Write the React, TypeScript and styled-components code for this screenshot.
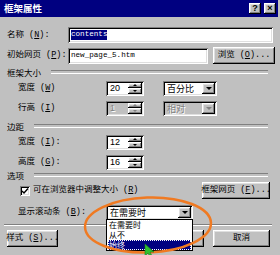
import React from 'react';
import styled, { createGlobalStyle } from 'styled-components';

const GlobalStyle = createGlobalStyle`
  html, body {
    margin: 0;
    padding: 0;
    background: #c0c0c0;
  }
  body {
    font-family: "Liberation Mono", "Noto Sans CJK SC", monospace;
    font-size: 8.5px;
    color: #000;
  }
  * {
    box-sizing: border-box;
  }
`;

const raised = `
  box-shadow: inset -1px -1px #000, inset 1px 1px #fff,
    inset -2px -2px #808080, inset 2px 2px #dfdfdf;
`;

const sunken = `
  box-shadow: inset 1px 1px #808080, inset -1px -1px #fff,
    inset 2px 2px #000, inset -2px -2px #dfdfdf;
`;

const Dialog = styled.div`
  position: relative;
  width: 280px;
  height: 255px;
  overflow: hidden;
  background: #c0c0c0;
`;

const TitleBar = styled.div`
  display: flex;
  align-items: center;
  width: 278px;
  height: 17px;
  padding: 0 2px 0 4px;
  background: #000080;
`;

const Title = styled.div`
  flex: 1;
  color: #fff;
  font-family: "Noto Sans CJK SC", sans-serif;
  font-weight: bold;
  font-size: 9.5px;
  line-height: 1;
`;

const TitleButton = styled.div`
  display: flex;
  align-items: center;
  justify-content: center;
  width: 12px;
  height: 11px;
  margin-left: 3px;
  background: #c0c0c0;
  ${raised}
  font: bold 9px "Liberation Sans", sans-serif;
  line-height: 1;
`;

const Body = styled.div`
  display: flex;
  flex-direction: column;
  padding-left: 7px;
`;

const Row = styled.div<{ $mt: number; $h?: number; $indent?: number; $w?: number }>`
  display: flex;
  align-items: center;
  height: ${(p) => p.$h ?? 16}px;
  margin-top: ${(p) => p.$mt}px;
  padding-left: ${(p) => p.$indent ?? 0}px;
  width: ${(p) => (p.$w ? `${p.$w}px` : 'auto')};
  line-height: 1;
`;

const Label = styled.span<{ $w?: number }>`
  flex: none;
  width: ${(p) => (p.$w ? `${p.$w}px` : 'auto')};
  white-space: nowrap;
`;

const TextBox = styled.div<{ $w: number }>`
  display: flex;
  align-items: center;
  width: ${(p) => p.$w}px;
  height: 16px;
  padding-left: 3px;
  background: #fff;
  ${sunken}
  font-size: 7.6px;
  white-space: nowrap;
`;

const Selection = styled.span`
  background: #000080;
  color: #fff;
  padding: 1px 0;
`;

const Field = styled.div<{ $w: number; $disabled?: boolean }>`
  position: relative;
  display: flex;
  width: ${(p) => p.$w}px;
  height: 15px;
  padding: 2px;
  background: ${(p) => (p.$disabled ? '#c0c0c0' : '#fff')};
  ${sunken}
`;

const FieldText = styled.span<{ $disabled?: boolean; $sans?: boolean }>`
  flex: 1;
  display: flex;
  align-items: center;
  padding-left: 2px;
  font-family: ${(p) => (p.$sans ? '"Liberation Sans", sans-serif' : '"Noto Sans CJK SC", sans-serif')};
  font-size: 9px;
  color: ${(p) => (p.$disabled ? '#808080' : '#000')};
  text-shadow: ${(p) => (p.$disabled ? '1px 1px #fff' : 'none')};
`;

const SpinButtons = styled.div`
  display: flex;
  flex-direction: column;
  width: 14px;
`;

const SpinButton = styled.div`
  flex: 1;
  display: flex;
  align-items: center;
  justify-content: center;
  background: #c0c0c0;
  ${raised}
`;

const Arrow = styled.span<{ $up?: boolean; $disabled?: boolean }>`
  width: 0;
  height: 0;
  border-left: 2px solid transparent;
  border-right: 2px solid transparent;
  ${(p) => (p.$up ? 'border-bottom' : 'border-top')}: 2px solid ${(p) => (p.$disabled ? '#808080' : '#000')};
`;

const DropButton = styled.div`
  display: flex;
  align-items: center;
  justify-content: center;
  width: 13px;
  background: #c0c0c0;
  ${raised}
`;

const DropArrow = styled.span<{ $disabled?: boolean }>`
  width: 0;
  height: 0;
  border-left: 3px solid transparent;
  border-right: 3px solid transparent;
  border-top: 3px solid ${(p) => (p.$disabled ? '#808080' : '#000')};
`;

const GroupHeader = styled.div<{ $mt: number }>`
  display: flex;
  align-items: center;
  width: 261px;
  height: 10px;
  margin-top: ${(p) => p.$mt}px;
  line-height: 1;
  font-family: "Noto Sans CJK SC", sans-serif;

  &::after {
    content: '';
    flex: 1;
    height: 2px;
    margin-left: 10px;
    border-top: 1px solid #808080;
    border-bottom: 1px solid #fff;
  }
`;

const Button = styled.div<{ $w: number; $ml?: string }>`
  display: flex;
  align-items: center;
  justify-content: center;
  flex: none;
  width: ${(p) => p.$w}px;
  height: 17px;
  margin-left: ${(p) => p.$ml ?? '0'};
  background: #c0c0c0;
  ${raised}
  white-space: nowrap;
`;

const CheckBox = styled.div`
  display: flex;
  align-items: center;
  justify-content: center;
  width: 10px;
  height: 10px;
  margin-right: 3px;
  background: #fff;
  ${sunken}
`;

const Separator = styled.div<{ $mt: number }>`
  width: 268px;
  height: 2px;
  margin: ${(p) => p.$mt}px 0 0 -3px;
  border-top: 1px solid #808080;
  border-bottom: 1px solid #fff;
`;

const DropList = styled.ul`
  position: absolute;
  left: 0;
  top: 100%;
  z-index: 2;
  width: 100%;
  height: 32px;
  margin: -1px 0 0;
  padding: 0 1px;
  list-style: none;
  background: #fff;
  border: 1px solid #000;
`;

const DropItem = styled.li<{ $selected?: boolean }>`
  display: flex;
  align-items: center;
  height: 10px;
  padding-left: 1px;
  font-family: "Noto Sans CJK SC", sans-serif;
  font-size: 8px;
  line-height: 8px;
  background: ${(p) => (p.$selected ? '#000080' : 'transparent')};
  color: ${(p) => (p.$selected ? '#fff' : '#000')};
  outline: ${(p) => (p.$selected ? '1px dotted #fff' : 'none')};
  outline-offset: -1px;
`;

const Annotation = styled.svg`
  position: absolute;
  left: 0;
  top: 0;
  z-index: 3;
  pointer-events: none;
`;

function Spin({ value, disabled }: { value: string; disabled?: boolean }) {
  return (
    <Field $w={38} $disabled={disabled}>
      <FieldText $sans $disabled={disabled}>{value}</FieldText>
      <SpinButtons>
        <SpinButton><Arrow $up $disabled={disabled} /></SpinButton>
        <SpinButton><Arrow $disabled={disabled} /></SpinButton>
      </SpinButtons>
    </Field>
  );
}

function Select({ value, width, disabled, children }: {
  value: string; width: number; disabled?: boolean; children?: React.ReactNode;
}) {
  return (
    <Field $w={width} $disabled={disabled}>
      <FieldText $disabled={disabled}>{value}</FieldText>
      <DropButton><DropArrow $disabled={disabled} /></DropButton>
      {children}
    </Field>
  );
}

export default function App() {
  return (
    <Dialog>
      <GlobalStyle />
      <TitleBar>
        <Title>框架属性</Title>
        <TitleButton>?</TitleButton>
        <TitleButton>×</TitleButton>
      </TitleBar>
      <Body>
        <Row $mt={10}>
          <Label $w={61}>名称 (<u>N</u>):</Label>
          <TextBox $w={205}><Selection>contents</Selection></TextBox>
        </Row>
        <Row $mt={4} $h={17}>
          <Label $w={61}>初始网页 (<u>P</u>):</Label>
          <TextBox $w={140}>new_page_5.htm</TextBox>
          <Button $w={62} $ml="5px">浏览 (<u>O</u>)...</Button>
        </Row>

        <GroupHeader $mt={3}>框架大小</GroupHeader>
        <Row $mt={3} $indent={11}>
          <Label $w={88}>宽度 (<u>W</u>)</Label>
          <Spin value="20" />
          <Label $w={19} />
          <Select value="百分比" width={54} />
        </Row>
        <Row $mt={4} $indent={11}>
          <Label $w={88}>行高 (<u>I</u>)</Label>
          <Spin value="1" disabled />
          <Label $w={19} />
          <Select value="相对" width={54} disabled />
        </Row>

        <GroupHeader $mt={5}>边距</GroupHeader>
        <Row $mt={3} $indent={11}>
          <Label $w={88}>宽度 (<u>I</u>):</Label>
          <Spin value="12" />
        </Row>
        <Row $mt={4} $indent={11}>
          <Label $w={88}>高度 (<u>G</u>):</Label>
          <Spin value="16" />
        </Row>

        <GroupHeader $mt={0}>选项</GroupHeader>
        <Row $mt={2} $h={17} $indent={13} $w={263}>
          <CheckBox>
            <svg width="8" height="8" viewBox="0 0 8 8">
              <path d="M1 4 L3 6 L7 1.5" fill="none" stroke="#000" strokeWidth="1.4" />
            </svg>
          </CheckBox>
          <Label>可在浏览器中调整大小 (<u>R</u>)</Label>
          <Button $w={68} $ml="auto">框架网页 (<u>F</u>)...</Button>
        </Row>
        <Row $mt={5} $indent={11}>
          <Label $w={88}>显示滚动条 (<u>B</u>):</Label>
          <Select value="在需要时" width={87}>
            <DropList>
              <DropItem>在需要时</DropItem>
              <DropItem>从不</DropItem>
              <DropItem $selected>始终</DropItem>
            </DropList>
          </Select>
        </Row>

        <Separator $mt={4} />
        <Row $mt={4} $h={17} $w={263}>
          <Button $w={51}>样式 (<u>S</u>)...</Button>
          <Button $w={56} $ml="auto">确定</Button>
          <Button $w={57} $ml="9px">取消</Button>
        </Row>
      </Body>

      <Annotation width="280" height="255" viewBox="0 0 280 255">
        <ellipse cx="148" cy="225" rx="63" ry="27.5" fill="none" stroke="#f07a22" strokeWidth="2.5" transform="rotate(-2 148 225)" />
        <path d="M145 244 L145 256 L148 253 L150 257 L152 256 L150 252 L154 252 Z" fill="#30c030" stroke="#1a7a1a" strokeWidth="0.6" />
      </Annotation>
    </Dialog>
  );
}
